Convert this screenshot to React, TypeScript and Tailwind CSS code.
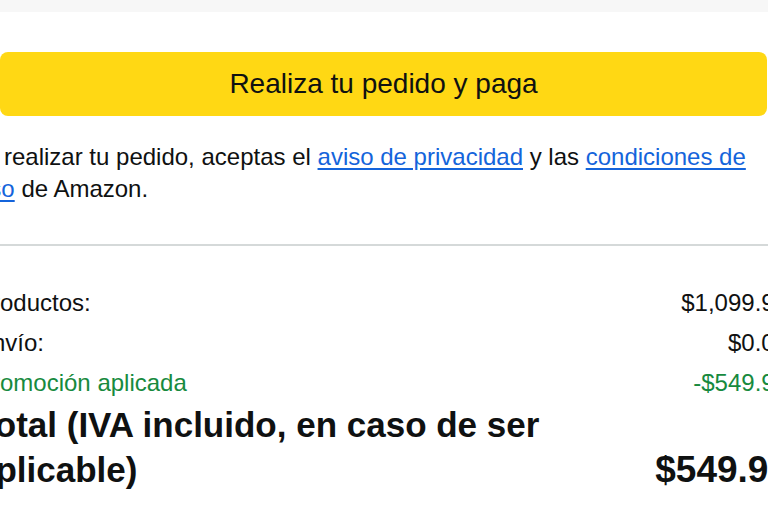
import React from "react";

const rows = [
  { label: "Productos:", value: "$1,099.99", color: "text-[#0f1111]" },
  { label: "Envío:", value: "$0.00", color: "text-[#0f1111]" },
  { label: "Promoción aplicada", value: "-$549.99", color: "text-[#178a3e]" },
];

const App = () => {
  return (
    <div className="w-[768px] h-[522px] overflow-hidden bg-white font-['Liberation_Sans',Arial,sans-serif] text-[#0f1111]">
      <div className="h-[12px] bg-[#f7f7f7]" />

      <div className="-ml-[24px] w-[806px]">
        <div className="pt-[40px] pl-[24px]">
          <button className="w-[767px] h-[64px] rounded-[8px] bg-[#ffd814] text-[28px] text-[#0f1111] flex items-center justify-center">
            Realiza tu pedido y paga
          </button>
        </div>

        <p className="mt-[25px] text-[24px] leading-[32px]">
          Al realizar tu pedido, aceptas el{" "}
          <a href="#" className="text-[#1464db] underline underline-offset-[3px]">
            aviso de privacidad
          </a>{" "}
          y las{" "}
          <a href="#" className="text-[#1464db] underline underline-offset-[3px]">
            condiciones de
            <br />
            uso
          </a>{" "}
          de Amazon.
        </p>

        <div className="mt-[39px] ml-[24px] h-[2px] bg-[#d5d9d9]" />

        <div className="mt-[37px] flex flex-col">
          {rows.map((r) => (
            <div
              key={r.label}
              className={`flex justify-between -mr-[6px] text-[24px] leading-[40px] ${r.color}`}
            >
              <span>{r.label}</span>
              <span>{r.value}</span>
            </div>
          ))}
          <div className="flex justify-between items-end -mr-[7px] font-bold text-[35px] leading-[45px] -mt-[1px]">
            <span>
              Total (IVA incluido, en caso de ser
              <br />
              aplicable)
            </span>
            <span className="text-[37px]">$549.99</span>
          </div>
        </div>
      </div>
    </div>
  );
};

export default App;
